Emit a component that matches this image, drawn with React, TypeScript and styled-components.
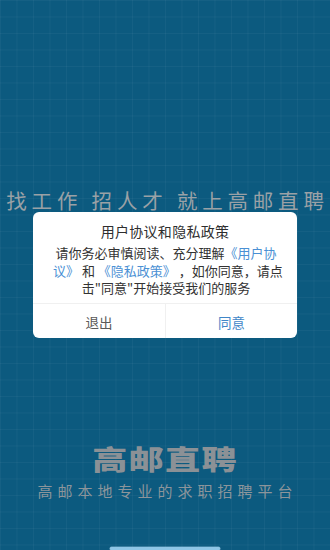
import React from "react";
import styled, { createGlobalStyle } from "styled-components";

const Global = createGlobalStyle`
  html, body { margin: 0; padding: 0; }
  body {
    width: 330px;
    height: 550px;
    overflow: hidden;
    font-family: "Noto Sans CJK SC", "Noto Sans", sans-serif;
  }
  * { box-sizing: border-box; }
`;

const Page = styled.div`
  position: relative;
  width: 330px;
  height: 550px;
  display: flex;
  flex-direction: column;
  align-items: center;
  padding-top: 187px;
  background-color: #0c5a7f;
  background-image:
    linear-gradient(to right, rgba(255, 255, 255, 0.04) 1px, transparent 1px),
    linear-gradient(to bottom, rgba(255, 255, 255, 0.04) 1px, transparent 1px);
  background-size: 16.5px 16.5px;
  background-position: 0 0;
`;

const Headline = styled.div`
  font-size: 20.5px;
  line-height: 26px;
  letter-spacing: 4.8px;
  color: #9aa1a6;
  white-space: nowrap;
  padding-left: 5px;
`;

const Brand = styled.div`
  margin-top: auto;
  display: flex;
  flex-direction: column;
  align-items: center;
  gap: 6px;
`;

const BrandTitle = styled.div`
  font-size: 27px;
  line-height: 32px;
  font-weight: 900;
  letter-spacing: 1px;
  color: #8b9196;
  transform: scaleX(1.3);
  white-space: nowrap;
`;

const Slogan = styled.div`
  font-size: 15px;
  line-height: 20px;
  letter-spacing: 5px;
  padding-left: 5px;
  color: #8c959b;
  white-space: nowrap;
`;

const HomeBar = styled.div`
  margin-top: 40px;
  width: 110px;
  height: 3px;
  border-radius: 2px;
  background: #8fc6e6;
  box-shadow: 0 0 0 0.5px rgba(180, 220, 245, 0.6);
`;

const Overlay = styled.div`
  position: absolute;
  inset: 0;
  display: flex;
  align-items: center;
  justify-content: center;
`;

const Dialog = styled.div`
  width: 264px;
  background: #ffffff;
  border-radius: 6px;
  display: flex;
  flex-direction: column;
  overflow: hidden;
`;

const Title = styled.div`
  padding-top: 10px;
  font-size: 14px;
  line-height: 18px;
  color: #2e2e2e;
  text-align: center;
  letter-spacing: 0.3px;
`;

const Body = styled.div`
  padding: 4px 18px 6px 20px;
  font-size: 13px;
  line-height: 17.5px;
  color: #333333;
  text-align: center;
`;

const Line = styled.span`
  display: block;
  white-space: nowrap;
`;

const Link = styled.span`
  color: #4a90d4;
`;

const Actions = styled.div`
  display: grid;
  grid-template-columns: 1fr 1fr;
  height: 35px;
  border-top: 1px solid #f0f0f0;
`;

const ActionButton = styled.div<{ $primary?: boolean }>`
  display: flex;
  align-items: center;
  justify-content: center;
  padding-top: 3px;
  font-size: 13.5px;
  color: ${(p) => (p.$primary ? "#3f86c8" : "#5a5a5a")};
  border-left: ${(p) => (p.$primary ? "1px solid #f0f0f0" : "none")};
`;

export default function App() {
  return (
    <>
      <Global />
      <Page>
        <Headline>找工作 招人才 就上高邮直聘</Headline>
        <Brand>
          <BrandTitle>高邮直聘</BrandTitle>
          <Slogan>高邮本地专业的求职招聘平台</Slogan>
          <HomeBar />
        </Brand>
        <Overlay>
          <Dialog>
            <Title>用户协议和隐私政策</Title>
            <Body>
              <Line>
                请你务必审慎阅读、充分理解<Link>《用户协</Link>
              </Line>
              <Line>
                <Link>议》</Link> 和 <Link>《隐私政策》</Link> ，如你同意，请点
              </Line>
              <Line>击"同意"开始接受我们的服务</Line>
            </Body>
            <Actions>
              <ActionButton>退出</ActionButton>
              <ActionButton $primary>同意</ActionButton>
            </Actions>
          </Dialog>
        </Overlay>
      </Page>
    </>
  );
}
